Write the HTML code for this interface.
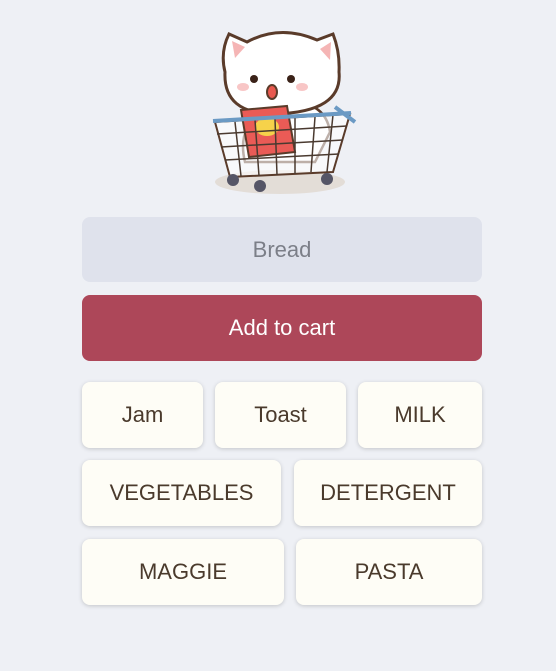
<!DOCTYPE html>
<html><head><style>
body{margin:0;width:556px;height:671px;background:#eef0f5;font-family:"Liberation Sans",sans-serif;position:relative;overflow:hidden}
.a{position:absolute;box-sizing:border-box;display:flex;align-items:center;justify-content:center}
.inp{left:82px;top:217px;width:400px;height:65px;background:#dfe2ec;border-radius:8px;color:#7c7f88;font-size:22px}
.btn{left:82px;top:295px;width:400px;height:66px;background:#ad4759;border-radius:8px;color:#fff;font-size:22px}
.t{background:#fefdf6;border-radius:8px;box-shadow:0 1px 4px rgba(0,0,0,.18);color:#4a3a2c;font-size:22px;height:66px}
</style></head><body>
<svg class="a" style="left:205px;top:22px" width="155" height="175" viewBox="0 0 155 175">
<ellipse cx="75" cy="160" rx="65" ry="12" fill="#e3ddd7"/>
<path d="M70 80 Q120 75 125 110 L110 140 L40 140 Q30 100 70 80Z" fill="#fff" stroke="#5a3b2a" stroke-width="2.5"/>
<path d="M20 50 Q15 30 24 12 L42 20 Q75 2 112 18 L128 12 Q135 30 134 50 Q138 90 70 92 Q18 92 20 50Z" fill="#fff" stroke="#5a3b2a" stroke-width="3"/>
<path d="M27 19 L30 36 L40 25Z" fill="#f5b5b5"/><path d="M126 20 L125 38 L115 27Z" fill="#f5b5b5"/>
<circle cx="49" cy="57" r="4" fill="#3a2218"/><circle cx="86" cy="57" r="4" fill="#3a2218"/>
<ellipse cx="38" cy="65" rx="6" ry="4" fill="#f8c6c6"/><ellipse cx="97" cy="65" rx="6" ry="4" fill="#f8c6c6"/>
<ellipse cx="67" cy="70" rx="5" ry="7" fill="#e9594f" stroke="#5a3b2a" stroke-width="2"/>
<path d="M10 100 L145 92 L128 150 L25 155Z" fill="#fff" fill-opacity=".6" stroke="#5a3b2a" stroke-width="2"/>
<path d="M36 88 L82 84 L90 130 L44 135Z" fill="#ea5b56" stroke="#5a3b2a" stroke-width="2"/>
<ellipse cx="62" cy="105" rx="12" ry="9" fill="#f6d24a"/>
<g stroke="#4a3a30" stroke-width="1.5" fill="none"><path d="M12 112 L142 104 M16 125 L138 118 M20 138 L134 132"/><path d="M30 100 L36 154 M50 98 L54 154 M70 97 L72 153 M90 96 L90 152 M110 95 L106 150 M128 93 L122 150"/></g>
<path d="M8 99 L146 91 M130 85 L150 100" stroke="#6b9ac4" stroke-width="4" fill="none"/>
<circle cx="28" cy="158" r="6" fill="#556"/><circle cx="55" cy="164" r="6" fill="#556"/><circle cx="122" cy="157" r="6" fill="#556"/>
</svg>
<div class="a inp">Bread</div>
<div class="a btn">Add to cart</div>
<div class="a t" style="left:82px;top:382px;width:121px">Jam</div>
<div class="a t" style="left:215px;top:382px;width:131px">Toast</div>
<div class="a t" style="left:358px;top:382px;width:124px">MILK</div>
<div class="a t" style="left:82px;top:460px;width:199px">VEGETABLES</div>
<div class="a t" style="left:294px;top:460px;width:188px">DETERGENT</div>
<div class="a t" style="left:82px;top:539px;width:202px">MAGGIE</div>
<div class="a t" style="left:296px;top:539px;width:186px">PASTA</div>
</body></html>
